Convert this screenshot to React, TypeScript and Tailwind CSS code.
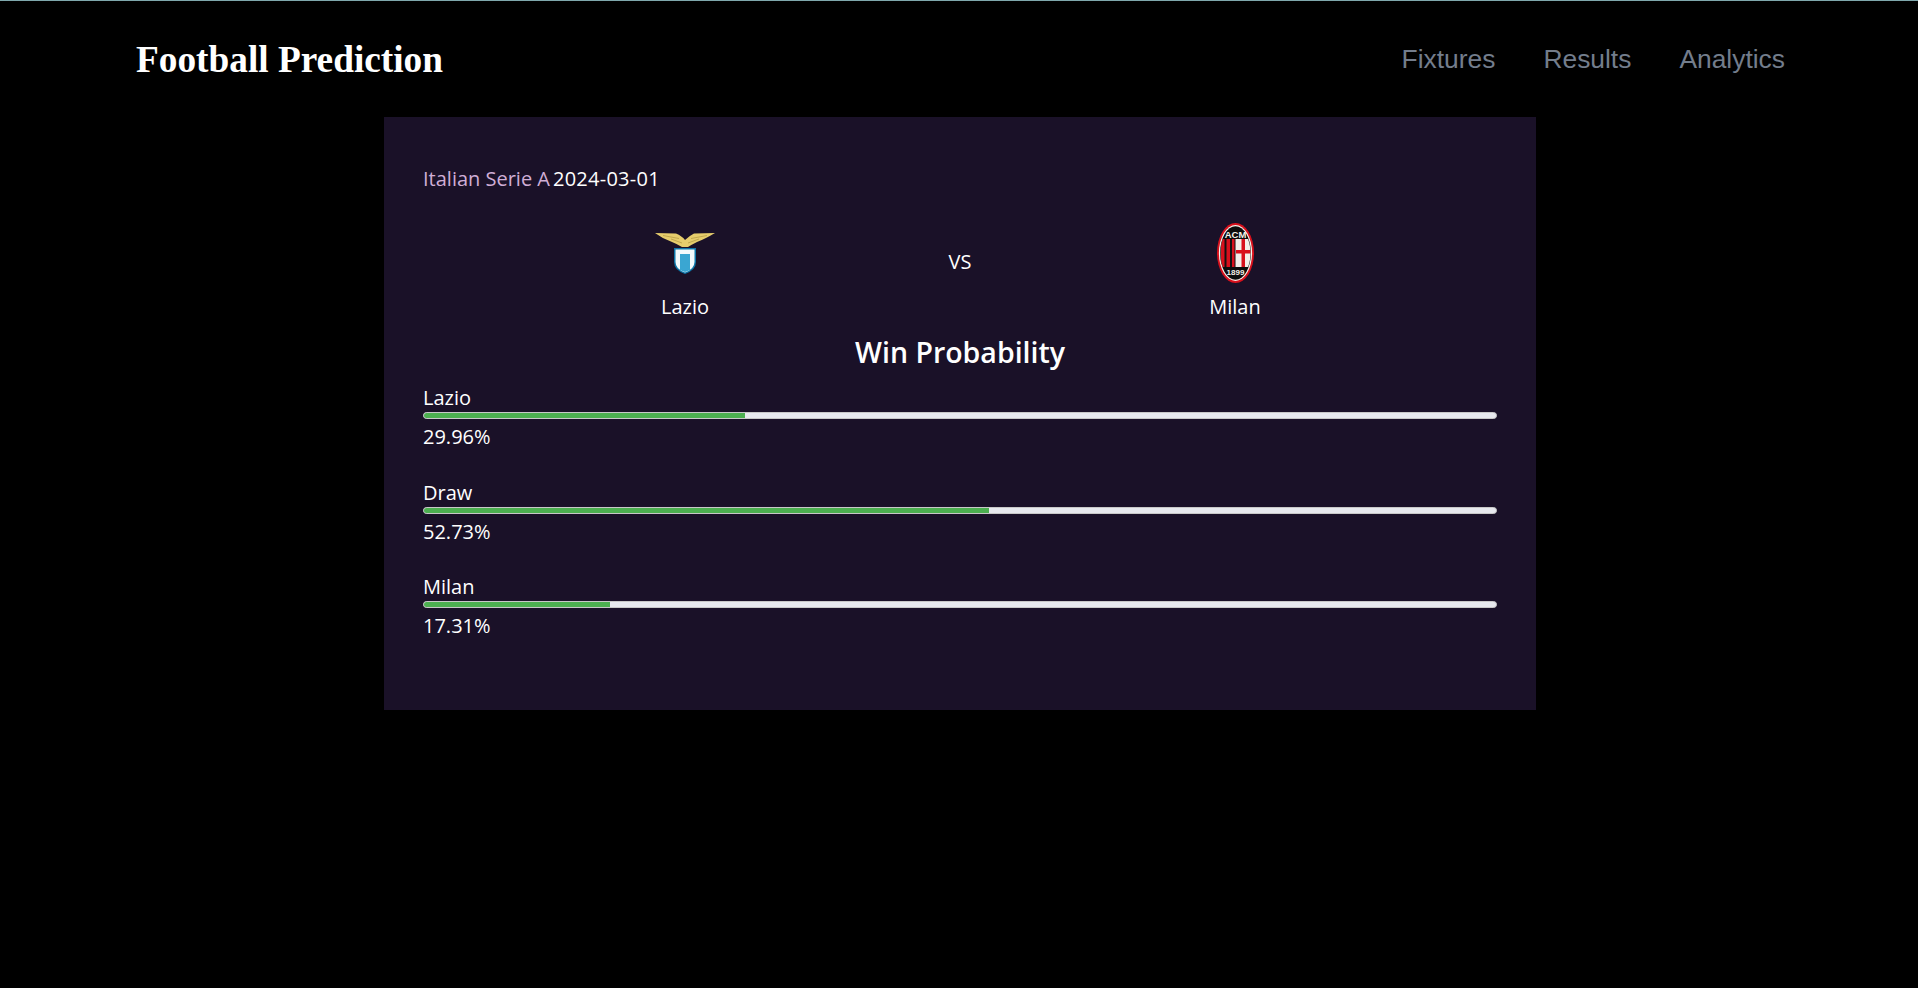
const segoe = "font-['Open_Sans','Noto_Sans',sans-serif]";

const outcomes = [
  { label: "Lazio", value: 29.96 },
  { label: "Draw", value: 52.73 },
  { label: "Milan", value: 17.31 },
];

function LazioCrest() {
  return (
    <svg width="60" height="60" viewBox="0 0 60 60" aria-hidden="true">
      <g transform="translate(0 10)">
        <path d="M0 0 L21 0.5 Q27 3 30 7 Q34 3 39 0.5 L60 0 Q50 6 42 9 Q36 12 33 14 L27 14 Q22 11 17 9 Q8 6 0 0Z" fill="#e6cd6c" />
        <path d="M8 2.5 L24 5.5 M52 2.5 L36 5.5 M16 6 L27 10 M44 6 L33 10" stroke="#b0963f" strokeWidth="0.7" fill="none" />
        <path d="M19 15 L41 15 L41 29 Q41 37 30 41 Q19 37 19 29Z" fill="#0d76a8" />
        <path d="M20.5 16.5 L39.5 16.5 L39.5 29 Q39.5 36 30 39.5 Q20.5 36 20.5 29Z" fill="#f4fafc" />
        <path d="M25 21 L35 21 L35 37 Q32 38.5 30 39 Q28 38.5 25 37Z" fill="#3aa6d2" />
      </g>
    </svg>
  );
}

function MilanCrest() {
  return (
    <svg width="60" height="60" viewBox="0 0 60 60" aria-hidden="true">
      <defs>
        <clipPath id="milan-inner">
          <ellipse cx="18.5" cy="30" rx="15" ry="26" />
        </clipPath>
      </defs>
      <g transform="translate(12 0)">
        <ellipse cx="18.5" cy="30" rx="18.5" ry="30" fill="#d8101c" />
        <ellipse cx="18.5" cy="30" rx="16.6" ry="28" fill="#f5f1ea" />
        <ellipse cx="18.5" cy="30" rx="15.4" ry="26.8" fill="#0c0c0c" />
        <g clipPath="url(#milan-inner)">
          <rect x="3" y="16" width="31" height="28" fill="#f2efe9" />
          <rect x="3" y="16" width="15.5" height="28" fill="#111" />
          <rect x="4" y="16" width="3.5" height="28" fill="#d8101c" />
          <rect x="9.5" y="16" width="3.5" height="28" fill="#d8101c" />
          <rect x="15" y="16" width="2.5" height="28" fill="#d8101c" />
          <rect x="24.5" y="16" width="3.5" height="28" fill="#d8101c" />
          <rect x="19" y="27" width="15" height="3.5" fill="#d8101c" />
        </g>
        <text x="18.5" y="14.5" textAnchor="middle" fontSize="9.5" fontWeight="700" fill="#f5f1ea" fontFamily="Liberation Sans">ACM</text>
        <text x="18.5" y="52" textAnchor="middle" fontSize="8" fontWeight="700" fill="#f5f1ea" fontFamily="Liberation Sans">1899</text>
      </g>
    </svg>
  );
}

function Team({ name, children }: { name: string; children: React.ReactNode }) {
  return (
    <div className="flex flex-col items-center">
      {children}
      <p className="mt-[10px] text-[20px] leading-[27px] text-white">{name}</p>
    </div>
  );
}

export default function App() {
  return (
    <div className={`min-h-[988px] border-t border-[#7fa8ad] bg-black ${segoe}`}>
      <header className="flex h-[116px] items-center justify-between pt-[2px] pr-[133px] pl-[136px]">
        <h1 className="font-['Liberation_Serif',serif] text-[37.3px] font-bold text-white">Football Prediction</h1>
        <nav className="flex gap-[48px] font-['Liberation_Sans',sans-serif] text-[26.4px] text-[#737d8c]">
          <a>Fixtures</a>
          <a>Results</a>
          <a>Analytics</a>
        </nav>
      </header>

      <main className="ml-[384px] w-[1152px] bg-[#1a1128] px-[39px] pt-12 pb-[42px]">
        <div className="flex gap-[3px] text-[20px] leading-[27px]">
          <span className="text-[#d0aed6]">Italian Serie A</span>
          <span className="tracking-[0.25px] text-white">2024-03-01</span>
        </div>
        <div className="mt-[31px] grid grid-cols-[275px_275px_275px] items-center justify-center justify-items-center">
          <Team name="Lazio"><LazioCrest /></Team>
          <span className="mb-[20px] text-[20px] text-white">VS</span>
          <Team name="Milan"><MilanCrest /></Team>
        </div>
        <h2 className="mt-[11px] text-center text-[28.5px] leading-[42px] font-semibold text-white">Win Probability</h2>
        <div className="mt-[11px]">
          {outcomes.map((o) => (
            <div key={o.label} className="mb-[28.6px] text-[20px] leading-[27px] text-white">
              <div>{o.label}</div>
              <div className="mt-px h-[7px] overflow-hidden rounded-full border border-[#c8c8c8] bg-[#e7e9ee]">
                <div className="h-full bg-[#4caf50]" style={{ width: `${o.value}%` }} />
              </div>
              <div className="mt-1">{o.value}%</div>
            </div>
          ))}
        </div>
      </main>
    </div>
  );
}
